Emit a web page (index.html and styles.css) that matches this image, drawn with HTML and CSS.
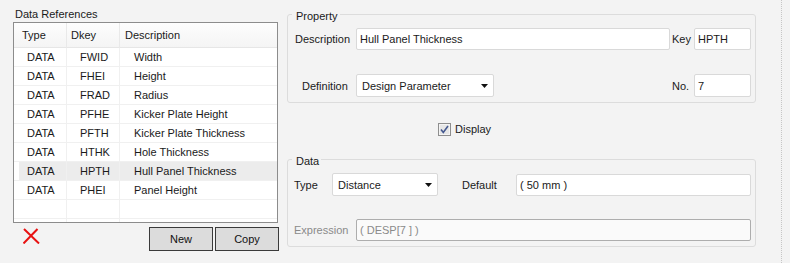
FILE: index.html
```html
<!DOCTYPE html>
<html>
<head>
  <title>Data References</title>
  <meta charset="UTF-8">
  <link rel="stylesheet" href="styles.css">
</head>
<body>
  <div class="window">
    <!-- Data references list -->
    <div class="refs">
      <div class="refs-title">Data References</div>
      <div class="list">
        <div class="row head"><span>Type</span><span>Dkey</span><span>Description</span></div>
        <div class="row"><span>DATA</span><span>FWID</span><span>Width</span></div>
        <div class="row"><span>DATA</span><span>FHEI</span><span>Height</span></div>
        <div class="row"><span>DATA</span><span>FRAD</span><span>Radius</span></div>
        <div class="row"><span>DATA</span><span>PFHE</span><span>Kicker Plate Height</span></div>
        <div class="row"><span>DATA</span><span>PFTH</span><span>Kicker Plate Thickness</span></div>
        <div class="row"><span>DATA</span><span>HTHK</span><span>Hole Thickness</span></div>
        <div class="row sel"><span>DATA</span><span>HPTH</span><span>Hull Panel Thickness</span></div>
        <div class="row"><span>DATA</span><span>PHEI</span><span>Panel Height</span></div>
        <div class="row"><span></span><span></span><span></span></div>
        <div class="row"><span></span><span></span><span></span></div>
      </div>
      <div class="actions">
        <svg class="delete" width="17" height="16" viewBox="0 0 17 16">
          <path d="M1 1L16 15.5M14.5 1L0.5 15.5" stroke="#e81212" stroke-width="2" fill="none"/>
        </svg>
        <div class="buttons">
          <button>New</button>
          <button>Copy</button>
        </div>
      </div>
    </div>

    <!-- Property / data editor -->
    <div class="props">
      <div class="group">
        <div class="group-title">Property</div>
        <div class="prop-grid">
          <span class="lbl desc-lbl">Description</span>
          <input class="field" type="text" value="Hull Panel Thickness">
          <span class="lbl side-lbl">Key</span>
          <input class="field" type="text" value="HPTH">

          <span class="lbl def-lbl">Definition</span>
          <div class="combo def-combo">
            <span>Design Parameter</span>
            <svg width="7" height="4" viewBox="0 0 7 4"><path d="M0 0H7L3.5 4Z" fill="#111"/></svg>
          </div>
          <span class="lbl side-lbl">No.</span>
          <input class="field" type="text" value="7">
        </div>
      </div>

      <label class="check">
        <svg width="13" height="13" viewBox="0 0 13 13">
          <rect x="0.5" y="0.5" width="12" height="12" fill="#dedede" stroke="#8e8e8e"/>
          <rect x="1.5" y="1.5" width="10" height="10" fill="#e6e6e6" stroke="#f4f4f4"/>
          <path d="M3 6.5L5.3 9.5L10 3" stroke="#44588f" stroke-width="1.6" fill="none"/>
        </svg>
        <span>Display</span>
      </label>

      <div class="group data-group">
        <div class="group-title">Data</div>
        <div class="data-row">
          <span class="lbl type-lbl">Type</span>
          <div class="combo">
            <span>Distance</span>
            <svg width="7" height="4" viewBox="0 0 7 4"><path d="M0 0H7L3.5 4Z" fill="#111"/></svg>
          </div>
          <span class="lbl default-lbl">Default</span>
          <input class="field" type="text" value="( 50 mm )">
        </div>
        <div class="expr-row">
          <span class="lbl type-lbl muted">Expression</span>
          <input class="field disabled" type="text" value="( DESP[7 ] )" disabled>
        </div>
      </div>
    </div>

    <div class="splitter"></div>
  </div>
</body>
</html>
```

FILE: styles.css
```css
body { margin: 0; background: #f3f3f3; font: 11px "Liberation Sans", Arial, sans-serif; color: #1a1a1a; }
.window { display: flex; height: 263px; }

/* left list */
.refs { width: 266px; padding: 6px 0 0 13px; }
.refs-title { line-height: 16px; padding-left: 2px; }
.list { width: 265px; height: 201px; box-sizing: border-box; border: 1px solid #8c8c8c; background: #fff; overflow: hidden; }
.row { display: grid; grid-template-columns: 53px 53px 1fr; height: 19px; }
.row span { box-sizing: border-box; height: 19px; line-height: 19px; border-bottom: 1px solid #f0f0f0; border-right: 1px solid #f0f0f0; padding-left: 13px; white-space: nowrap; }
.row span:last-child { border-right: 0; padding-left: 14px; }
.row.head { height: 25px; background: linear-gradient(#fdfdfd, #f4f4f4); }
.row.head span { height: 25px; line-height: 24px; border-bottom-color: #e6e6e6; border-right-color: #e9e9e9; }
.row.head span:nth-child(1) { padding-left: 8px; }
.row.head span:nth-child(2) { padding-left: 4px; }
.row.head span:nth-child(3) { padding-left: 5px; }
.row.sel span { background: #ececec; }
.row.sel span:first-child { background: linear-gradient(to right, #fff 5px, #ececec 5px); }

.actions { display: flex; align-items: flex-start; margin-top: 4px; }
.delete { margin: 1px 0 0 10px; }
.buttons { margin-left: auto; display: flex; gap: 2px; }
button { width: 64px; height: 24px; padding: 0; border: 1px solid #3a3a3a; background: #dcdcdc; font: inherit; color: #111; }

/* right editor */
.props { width: 469px; margin-left: 8px; padding-top: 14px; }
.group { border: 1px solid #dcdcdc; border-radius: 3px; padding-bottom: 5px; }
.group-title { width: fit-content; margin: -7px 0 0 4px; padding: 0 2px 0 4px; line-height: 16px; background: #f3f3f3; }
.lbl { line-height: 16px; white-space: nowrap; }
.muted { color: #8a8a8a; }

.field { box-sizing: border-box; height: 22px; margin: 0; padding: 0 3px; border: 1px solid #d9d9d9; border-radius: 2px; background: #fff; font: inherit; color: #1a1a1a; outline: none; }
.field.disabled { border-color: #adadad; background: #fafafa; color: #8a8a8a; }
.combo { box-sizing: border-box; height: 23px; display: flex; align-items: center; justify-content: space-between; padding: 0 5px 0 5px; border: 1px solid #d9d9d9; border-radius: 2px; background: #fff; }

.prop-grid { display: grid; grid-template-columns: 68px 314px 24px 57px; grid-template-rows: 22px 23px; row-gap: 24px; align-items: center; margin-top: 4px; }
.prop-grid .field { width: 100%; }
.desc-lbl { padding-left: 7px; }
.def-lbl { padding-left: 14px; }
.side-lbl { padding-left: 2px; }
.def-combo { width: 138px; }
.prop-grid .field:last-child { height: 23px; }

.check { display: flex; align-items: center; gap: 4px; margin-top: 20px; padding-left: 151px; line-height: 13px; height: 13px; }
.check svg { display: block; }

.data-group { margin-top: 23px; }
.data-row { display: grid; grid-template-columns: 44px 106px 78px 235px; align-items: center; margin-top: 4px; }
.expr-row { display: grid; grid-template-columns: 68px 395px; align-items: center; margin-top: 23px; }
.type-lbl { padding-left: 6px; }
.default-lbl { padding-left: 24px; }
.data-row .field, .expr-row .field { width: 100%; }

.splitter { margin-left: 25px; border-left: 1px dotted #c6c6c6; }
```
